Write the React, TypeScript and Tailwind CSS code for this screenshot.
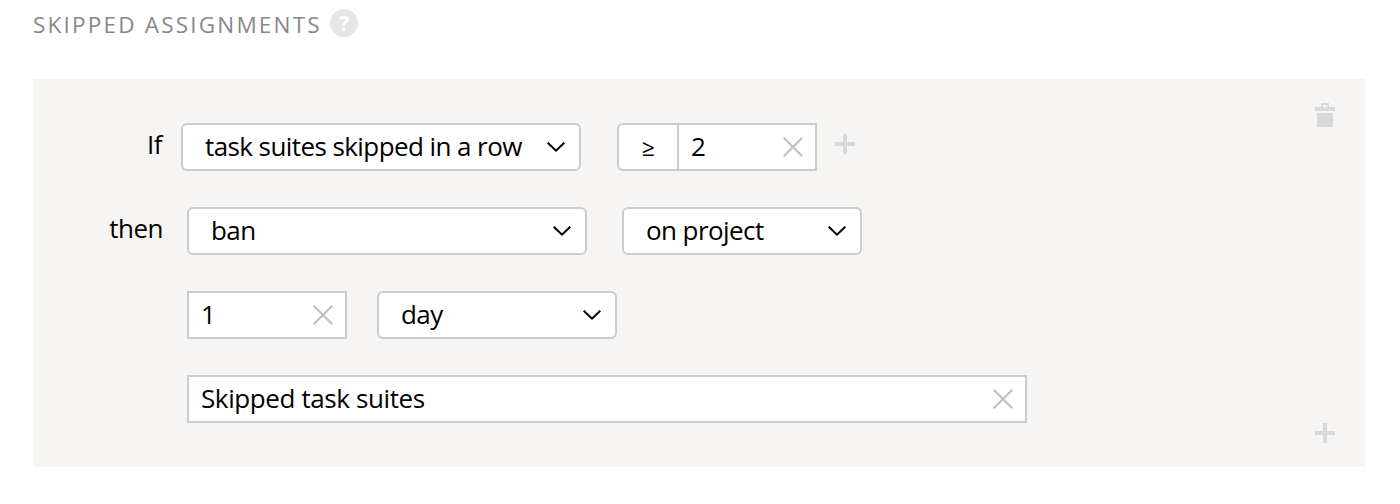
import type { ReactNode } from "react";

function Chevron() {
  return (
    <svg width="18" height="10" viewBox="0 0 18 10" fill="none" stroke="#000" strokeWidth="2" className="shrink-0">
      <path d="M0.7 0.7 9 8.6 17.3 0.7" />
    </svg>
  );
}

function Clear() {
  return (
    <svg width="20" height="20" viewBox="0 0 20 20" fill="none" stroke="#bfbfbf" strokeWidth="2" className="shrink-0">
      <path d="M0.7 0.7 19.3 19.3M19.3 0.7 0.7 19.3" />
    </svg>
  );
}

function Plus() {
  return (
    <svg width="20" height="20" viewBox="0 0 20 20" fill="#d9d9d9" className="block shrink-0">
      <path d="M8 0h4v8h8v4h-8v8H8v-8H0V8h8z" />
    </svg>
  );
}

function Trash() {
  return (
    <svg width="20" height="24" viewBox="0 0 20 24" fill="#d9d9d9" className="block shrink-0">
      <path fillRule="evenodd" d="M6 0h8v4h6v4H0V4h6zM8 2v2h4V2z" />
      <path d="M2 10h16v14H2z" />
    </svg>
  );
}

function Select({ className, children }: { className: string; children: ReactNode }) {
  return (
    <button className={`flex h-12 items-center justify-between rounded-[6px] border-2 border-[#ccc] bg-white pr-[14px] pl-[22px] tracking-[-0.58px] ${className}`}>
      <span className="pb-0.5">{children}</span>
      <Chevron />
    </button>
  );
}

function Field({ className, children }: { className: string; children: ReactNode }) {
  return (
    <div className={`flex h-12 items-center justify-between border-2 border-[#ccc] bg-white pr-3 pl-3 tracking-[-0.39px] ${className}`}>
      <span className="pb-0.5">{children}</span>
      <Clear />
    </div>
  );
}

export default function App() {
  return (
    <main className="h-[504px] bg-white px-[33px] font-['Open_Sans','Noto_Sans',sans-serif] text-[26px] leading-[42px] tracking-[-0.5px] whitespace-nowrap text-black">
      <header className="flex h-[79px] items-start">
        <h1 className="mt-1 w-[297px] text-[22.5px] tracking-[2.2px] text-[#888]">SKIPPED ASSIGNMENTS</h1>
        <span className="mt-[9px] flex size-7 items-center justify-center rounded-full bg-[#e6e6e6] text-[21px] leading-7 font-bold tracking-normal text-white">?</span>
      </header>
      <section className="flex h-[388px] w-[1332px] justify-between bg-[#f6f5f3] pt-11">
        <div className="flex flex-col gap-9">
          <div className="flex">
            <span className="w-[129px] text-right">If</span>
            <Select className="ml-[19px] w-[400px]">task suites skipped in a row</Select>
            <div className="ml-9 flex h-12 w-[60px] items-center justify-center rounded-l-[6px] border-2 border-r-0 border-[#ccc] bg-white">
              <span className="text-[23px] font-medium">≥</span>
            </div>
            <Field className="w-[140px]">2</Field>
            <div className="mt-[11px] ml-[18px]"><Plus /></div>
          </div>
          <div className="flex">
            <span className="w-[130px] text-right">then</span>
            <Select className="ml-[24px] w-[400px]">ban</Select>
            <Select className="ml-[35px] w-[240px]">on project</Select>
          </div>
          <div className="flex pl-[154px]">
            <Field className="w-[160px]">1</Field>
            <Select className="ml-[30px] w-[240px]">day</Select>
          </div>
          <div className="flex pl-[154px]">
            <Field className="w-[840px]">Skipped task suites</Field>
          </div>
        </div>
        <div className="-mt-5 mr-[30px] flex h-[340px] flex-col justify-between">
          <Trash />
          <Plus />
        </div>
      </section>
    </main>
  );
}
